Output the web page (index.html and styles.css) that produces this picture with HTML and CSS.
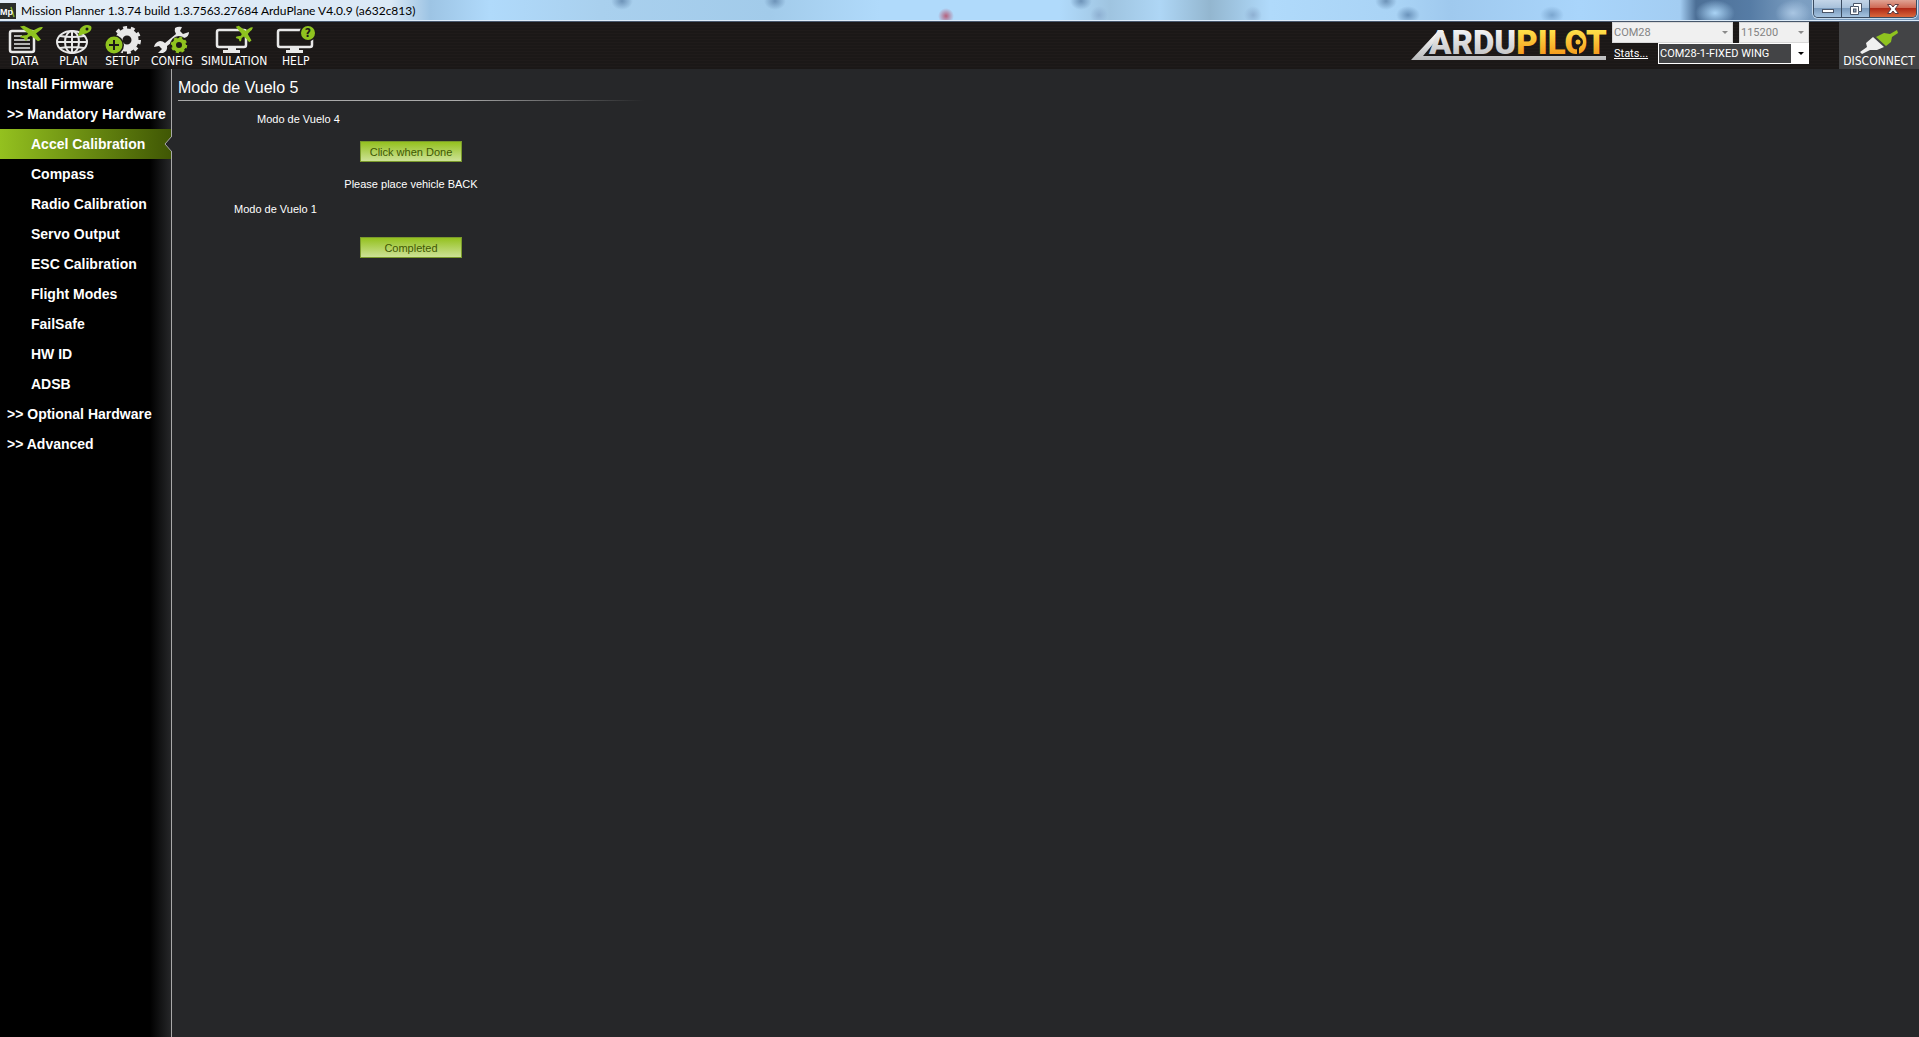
FILE: index.html
```
<!DOCTYPE html>
<html lang="en">

<head>
  <meta charset="utf-8">
  <title>Mission Planner</title>
  <link rel="stylesheet" href="styles.css">
</head>

<body>
  <!-- shared plane shape -->
  <svg class="defs" width="0" height="0">
    <symbol id="plane" viewBox="0 0 24 22" preserveAspectRatio="none">
      <path d="M2 14 L8 13 L9 11 L1 2 L5 1 L14 7 L19 4 Q22 2 24 3 Q23 6 20 8 L17 11 L22 19 L19 21 L12 14 L9 16 L8 20 L6 20 L5 17 L1 16 Z"/>
    </symbol>
  </svg>

  <header id="title-bar">
    <svg class="app-icon" width="16" height="16" viewBox="0 0 16 16">
      <rect width="16" height="16" fill="#2b2e2b"/>
      <path d="M11 4 L14 14" stroke="#7fae2b" stroke-width="1.5"/>
      <text x="0" y="12" font-size="9" font-weight="bold" fill="#fff">Mp</text>
    </svg>
    <span class="title">Mission Planner 1.3.74 build 1.3.7563.27684 ArduPlane V4.0.9 (a632c813)</span>
    <div class="window-buttons">
      <button class="minimize" aria-label="Minimize">
        <svg width="14" height="12" viewBox="0 0 14 12"><rect x="1.500" y="6.500" width="11" height="3" fill="#fff" stroke="#4a5568"/></svg>
      </button>
      <button class="restore" aria-label="Restore">
        <svg width="14" height="12" viewBox="0 0 14 12"><path d="M4.500 .5 H12.500 V8.500 H9.500 V11.500 H1.500 V3.500 H4.500 Z" fill="#fff" stroke="#4a5568"/><path d="M5 3.500 H9.500 V8" fill="none" stroke="#4a5568"/><rect x="4.500" y="6" width="2.500" height="3" fill="#8ea3bd" stroke="#4a5568"/></svg>
      </button>
      <button class="close" aria-label="Close">
        <svg width="14" height="12" viewBox="0 0 14 12"><path d="M1.500 1.500 H5 L7 4 L9 1.500 H12.500 L9 6 L12.500 10.500 H9 L7 8 L5 10.500 H1.500 L5 6 Z" fill="#fff" stroke="#5b3b43"/></svg>
      </button>
    </div>
  </header>

  <div id="menu-bar">
    <nav class="menu">
      <button>
        <svg width="36" height="29" viewBox="0 0 36 29">
          <rect x="3" y="6" width="24" height="21" rx="2" fill="none" stroke="#e8e8e8" stroke-width="2.500"/>
          <path d="M7 11 H15 M7 15 H23 M7 19 H23 M7 23 H23" stroke="#e8e8e8" stroke-width="1.500"/>
          <use href="#plane" x="12" y="0" width="24" height="17" fill="#8fc31f"/>
        </svg>
        <span>DATA</span>
      </button>
      <button>
        <svg width="36" height="29" viewBox="0 0 36 29">
          <g fill="none" stroke="#e8e8e8" stroke-width="2">
            <ellipse cx="16" cy="17" rx="15" ry="11"/>
            <ellipse cx="16" cy="17" rx="7" ry="11"/>
            <path d="M16 6 V28 M1 17 H31 M4 11 Q16 13 28 11 M4 23 Q16 21 28 23"/>
          </g>
          <path d="M22 11 L24 4 Q27 0 31 0 Q37 0 35 5 Q33 8 28 9 Z" fill="#8fc31f"/>
          <circle cx="31" cy="4" r="1.500" fill="#1b1817"/>
        </svg>
        <span>PLAN</span>
      </button>
      <button>
        <svg width="36" height="29" viewBox="0 0 36 29">
          <circle cx="22" cy="15" r="8" fill="none" stroke="#e8e8e8" stroke-width="7"/>
          <circle cx="22" cy="15" r="12.500" fill="none" stroke="#e8e8e8" stroke-width="3" stroke-dasharray="4 3.800"/>
          <circle cx="9" cy="20" r="10" fill="#1b1817"/>
          <circle cx="9" cy="20" r="8.500" fill="#8fc31f"/>
          <path d="M9 15 V25 M4 20 H14" stroke="#1b1817" stroke-width="2"/>
        </svg>
        <span>SETUP</span>
      </button>
      <button>
        <svg width="36" height="29" viewBox="0 0 36 29">
          <path d="M21 3 Q24 1 28 2 L26 6 L29 9 L35 7 Q35 12 30 13 Q27 14 25 12 L13 21 Q14 26 9 28 L4 28 L8 24 L5 21 L0 22 Q1 17 6 16 Q9 16 11 18 L22 9 Q20 6 21 3 Z" fill="#e8e8e8"/>
          <circle cx="25" cy="20" r="9" fill="#1b1817"/>
          <circle cx="25" cy="20" r="5" fill="none" stroke="#8fc31f" stroke-width="4"/>
          <circle cx="25" cy="20" r="7" fill="none" stroke="#8fc31f" stroke-width="2.500" stroke-dasharray="3 2.500"/>
        </svg>
        <span>CONFIG</span>
      </button>
      <button>
        <svg width="38" height="29" viewBox="0 0 38 29">
          <rect x="2" y="5" width="29" height="17" rx="2" fill="none" stroke="#e8e8e8" stroke-width="2.500"/>
          <path d="M13 22 H21 V25 H25 V28 H8 V25 H13 Z" fill="#e8e8e8"/>
          <use href="#plane" x="20" y="0" width="18" height="18" fill="#8fc31f"/>
        </svg>
        <span>SIMULATION</span>
      </button>
      <button>
        <svg width="40" height="29" viewBox="0 0 40 29">
          <rect x="2" y="5" width="34" height="17" rx="2" fill="none" stroke="#e8e8e8" stroke-width="2.500"/>
          <path d="M14 22 H23 V25 H27 V28 H10 V25 H14 Z" fill="#e8e8e8"/>
          <circle cx="32" cy="8" r="8.500" fill="#1b1817"/>
          <circle cx="32" cy="8" r="7" fill="#8fc31f"/>
          <text x="32" y="12" font-size="12" font-weight="bold" text-anchor="middle" fill="#1b1817">?</text>
        </svg>
        <span>HELP</span>
      </button>
    </nav>

    <svg class="logo" width="198" height="47" viewBox="0 -5 198 47">
      <defs>
        <linearGradient id="silver" x1="0" y1="0" x2="0" y2="1">
          <stop offset="0" stop-color="#ffffff"/>
          <stop offset="1" stop-color="#b9babc"/>
        </linearGradient>
        <linearGradient id="gold" gradientUnits="userSpaceOnUse" x1="0" y1="3" x2="0" y2="28">
          <stop offset="0" stop-color="#ffe14a"/>
          <stop offset="1" stop-color="#f59a1c"/>
        </linearGradient>
      </defs>
      <path d="M1 33 L28 4 L34 4 L13 29 H196 V33 Z" fill="url(#silver)"/>
      <text x="19" y="27" class="wordmark" fill="url(#silver)">ARDU<tspan fill="url(#gold)">PILOT</tspan></text>
      <circle cx="168" cy="15" r="5" fill="#1b1817"/>
      <path d="M167 18 H169 V28 H167 Z" fill="#1b1817"/>
      <circle cx="168" cy="15" r="2.500" fill="url(#gold)"/>
    </svg>

    <div class="connection">
      <div class="row">
        <span class="combo port"><select aria-label="Port" disabled><option>COM28</option></select></span>
        <span class="combo baud"><select aria-label="Baud rate" disabled><option>115200</option></select></span>
      </div>
      <div class="row">
        <a href="#">Stats...</a>
        <span class="combo vehicle"><select aria-label="Vehicle"><option>COM28-1-FIXED WING</option></select></span>
      </div>
    </div>

    <button class="disconnect">
      <svg width="38" height="29" viewBox="0 0 38 29">
        <path d="M0 27 L7 22 L6 18 L13 12 L24 22 L17 25 L10 25 L2 29 Z" fill="#f0f0f0"/>
        <path d="M16 12 L24 8 L30 9 L37 5 L38 8 L32 12 L31 17 L26 21 Z" fill="#8fc31f"/>
      </svg>
      <span>DISCONNECT</span>
    </button>
  </div>

  <div id="main">
    <nav id="side-bar">
      <a href="#">Install Firmware</a>
      <a href="#">&gt;&gt; Mandatory Hardware</a>
      <a href="#" class="sub selected">Accel Calibration
        <svg class="notch" width="8" height="16" viewBox="0 0 8 16"><path d="M8 0 L1 8 L8 16" fill="#262729" stroke="#a9a9a9"/></svg>
      </a>
      <a href="#" class="sub">Compass</a>
      <a href="#" class="sub">Radio Calibration</a>
      <a href="#" class="sub">Servo Output</a>
      <a href="#" class="sub">ESC Calibration</a>
      <a href="#" class="sub">Flight Modes</a>
      <a href="#" class="sub">FailSafe</a>
      <a href="#" class="sub">HW ID</a>
      <a href="#" class="sub">ADSB</a>
      <a href="#">&gt;&gt; Optional Hardware</a>
      <a href="#">&gt;&gt; Advanced</a>
    </nav>

    <main id="content">
      <section class="panel">
        <h1>Modo de Vuelo 5</h1>
        <p class="accel">Modo de Vuelo 4</p>
        <button>Click when Done</button>
        <p class="prompt">Please place vehicle BACK</p>
        <p class="level">Modo de Vuelo 1</p>
        <button>Completed</button>
      </section>
    </main>
  </div>
</body>

</html>
```

FILE: styles.css
```
html, body {
  margin: 0;
  padding: 0;
  height: 100%;
  overflow: hidden;
}
body {
  display: flex;
  flex-direction: column;
  background: #262729;
  color: white;
  font-family: "Liberation Sans", Arial, sans-serif;
  font-size: 11px;
}
button {
  padding: 0;
  border: 0 none;
  color: inherit;
  font-family: inherit;
  font-size: inherit;
}
.defs {
  position: absolute;
}

/* Title bar */
#title-bar {
  display: flex;
  align-items: flex-start;
  height: 22px;
  box-sizing: border-box;
  border-bottom: 1px solid #46566b;
  box-shadow: inset 0 -1px 0 #dcebf8;
  color: black;
  background:
    radial-gradient(ellipse at center, #b5617d 0%, transparent 70%) 938px 8px / 16px 16px no-repeat,
    radial-gradient(ellipse at center, #a9d3f5 0%, transparent 70%) 1695px 0 / 40px 26px no-repeat,
    radial-gradient(ellipse at center, #a9c6e3 0%, transparent 70%) 1775px 0 / 36px 26px no-repeat,
    radial-gradient(ellipse at center, #6d93b8 0%, transparent 70%) 611px -8px / 22px 18px no-repeat,
    radial-gradient(ellipse at center, #6d93b8 0%, transparent 70%) 764px -8px / 22px 18px no-repeat,
    radial-gradient(ellipse at center, #6d93b8 0%, transparent 70%) 1070px -8px / 22px 18px no-repeat,
    radial-gradient(ellipse at center, #6d93b8 0%, transparent 70%) 1375px -8px / 22px 18px no-repeat,
    radial-gradient(ellipse at center, #8eb0d2 0%, transparent 70%) 1090px 6px / 18px 18px no-repeat,
    radial-gradient(ellipse at center, #8eb0d2 0%, transparent 70%) 1244px 6px / 18px 18px no-repeat,
    radial-gradient(ellipse at center, #6a93bb 0%, transparent 70%) 1396px 6px / 24px 18px no-repeat,
    radial-gradient(ellipse at center, #7ba6cf 0%, transparent 70%) 1540px 6px / 24px 18px no-repeat,
    linear-gradient(to right, #e3edf6 0, #dbe9f6 390px, #9dc4e4 430px, #b0dafb 490px, #a9d0ee 600px, #a2cbea 770px, #b0dafb 880px, #b0dafb 1060px, #9fc4e0 1110px, #aed6f5 1160px, #93b6cf 1210px, #b0dafb 1270px, #a9d3f5 1400px, #9fc9ee 1450px, #a9d5fb 1580px, #a3cdf2 1680px, #4c6f96 1696px, #567ca5 1750px, #7d9fc2 1800px, #6f94ba 100%);
}
.app-icon {
  margin-top: 3px;
}
#title-bar .title {
  flex: 1;
  padding-left: 5px;
  font-family: "Lato", sans-serif;
  font-size: 12px;
  line-height: 21px;
  white-space: nowrap;
}
.window-buttons {
  display: flex;
  height: 18px;
  margin-right: 2px;
  box-sizing: border-box;
  border: 1px solid #3b4c61;
  border-top: 0 none;
  border-radius: 0 0 5px 5px;
  overflow: hidden;
  box-shadow: 0 0 0 1px #c4d9ec;
}
.window-buttons button {
  display: flex;
  align-items: center;
  justify-content: center;
  width: 28px;
  background: linear-gradient(#c3d5e8 0%, #a8c1db 45%, #7b9bbd 50%, #a5c3e0 100%);
  border-right: 1px solid #3b4c61;
}
.window-buttons .close {
  width: 46px;
  border-right: 0 none;
  background: linear-gradient(#e0a394 0%, #cf6a55 45%, #b02a17 50%, #d9673c 100%);
}

/* Menu bar */
#menu-bar {
  display: flex;
  height: 47px;
  background: repeating-linear-gradient(#1b1817 0, #1b1817 2px, #1f1b1a 2px, #1f1b1a 3px);
}
.menu {
  display: flex;
  flex: 1;
}
#menu-bar button {
  display: flex;
  flex-direction: column;
  align-items: center;
  min-width: 49px;
  padding: 3px 4px 0;
  background: none;
  font-family: "DejaVu Sans Condensed", "Roboto", sans-serif;
  font-size: 12px;
  line-height: 14px;
}
.logo {
  margin-right: 4px;
}
.wordmark {
  font-family: "Roboto", sans-serif;
  font-size: 33px;
  font-weight: 900;
}
.connection {
  display: flex;
  flex-direction: column;
  width: 197px;
  margin-right: 30px;
}
.connection .row {
  display: flex;
  justify-content: space-between;
  align-items: center;
}
.connection a {
  padding-left: 2px;
  color: white;
  font-family: "Roboto", sans-serif;
  font-size: 11px;
}
.combo {
  position: relative;
}
.combo select {
  display: block;
  width: 100%;
  height: 21px;
  padding: 0 1px;
  border: 1px solid #d8d8d8;
  border-radius: 0;
  appearance: none;
  background: #f0f0f0;
  color: #838383;
  opacity: 1;
  font-family: "Roboto", sans-serif;
  font-size: 11px;
}
.combo::after {
  content: "";
  position: absolute;
  top: 9px;
  right: 5px;
  border: 3px solid transparent;
  border-top-color: #8a8a8a;
  border-bottom: 0 none;
}
.port {
  width: 121px;
}
.baud {
  width: 70px;
}
.vehicle {
  width: 151px;
}
.vehicle select {
  border-color: white;
  background: linear-gradient(to left, white 17px, #434446 17px);
  color: white;
}
.vehicle::after {
  border-top-color: black;
}
#menu-bar .disconnect {
  width: 80px;
  background: #434446;
}

/* Side bar */
#main {
  display: flex;
  flex: 1;
}
#side-bar {
  width: 171px;
  border-right: 1px solid #a9a9a9;
  background: linear-gradient(to right, black 150px, #262729 171px);
}
#side-bar a {
  display: block;
  position: relative;
  padding-left: 7px;
  color: white;
  font-size: 14px;
  font-weight: bold;
  line-height: 30px;
  text-decoration: none;
  white-space: nowrap;
}
#side-bar .sub {
  padding-left: 31px;
}
#side-bar .selected {
  background: linear-gradient(to right, #94c11f, #405704);
}
.notch {
  position: absolute;
  top: 7px;
  right: -1px;
}

/* Content */
#content {
  flex: 1;
  padding: 6px;
}
.panel {
  display: flex;
  flex-direction: column;
  align-items: center;
  max-width: 466px;
}
.panel h1 {
  align-self: stretch;
  margin: 0 0 8px;
  background: linear-gradient(to right, #a9a9a9 60%, #262729) bottom / 100% 1px no-repeat;
  font-size: 16px;
  font-weight: normal;
  line-height: 26px;
}
.panel p {
  margin: 0;
  line-height: 20px;
}
.panel .accel,
.panel .level {
  align-self: flex-start;
}
.panel .accel {
  margin-left: 79px;
}
.panel .level {
  margin-left: 56px;
}
.panel .prompt {
  margin: 12px 0 5px;
}
.panel button {
  width: 102px;
  height: 21px;
  margin-top: 12px;
  border: 1px solid #7a9a2c;
  background: linear-gradient(#94c11f, #cde296);
  color: #405704;
}
.panel .level + button {
  margin-top: 18px;
}
```
